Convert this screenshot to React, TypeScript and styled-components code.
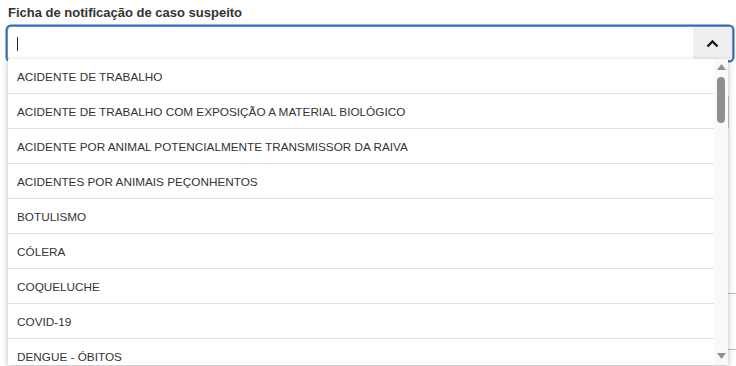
import * as React from "react";
import styled, { createGlobalStyle } from "styled-components";

const Global = createGlobalStyle`
  html, body {
    margin: 0;
    padding: 0;
    background: #ffffff;
    overflow: hidden;
  }
  body {
    font-family: "Liberation Sans", Arial, sans-serif;
    color: #333333;
  }
`;

const Page = styled.div`
  position: relative;
  width: 736px;
  height: 366px;
  padding: 4px 0 0 7px;
  box-sizing: border-box;
  overflow: hidden;
`;

const Label = styled.div`
  font-size: 13px;
  font-weight: 700;
  color: #333333;
  line-height: 17px;
  margin: 0 0 5px 1px;
`;

const Field = styled.div`
  position: relative;
  width: 726px;
`;

const InputBox = styled.div`
  height: 33px;
  border: 1px solid #888888;
  border-radius: 4px;
  box-shadow: 0 0 0 1.5px #1a6fd0;
  display: flex;
  align-items: stretch;
  overflow: hidden;
  background: #ffffff;
`;

const InputArea = styled.div`
  flex: 1;
  display: flex;
  align-items: center;
  padding-left: 9px;
`;

const Caret = styled.span`
  width: 1px;
  height: 14px;
  background: #222222;
`;

const ToggleButton = styled.div`
  width: 39px;
  background: #efeff1;
  display: flex;
  align-items: center;
  justify-content: center;
`;

const Behind = styled.div`
  display: flex;
  flex-direction: column;
  padding-left: 20px;
`;

const GhostSelect = styled.div`
  margin-top: 33px;
  height: 34px;
  width: 700px;
  border: 1px solid #cccccc;
  border-radius: 3px;
`;

const GhostTextarea = styled.div`
  margin-top: 163px;
  height: 55px;
  width: 709px;
  border-top: 1px solid #b9b9c8;
  border-bottom: 1px solid #b9b9c8;
`;

const Dropdown = styled.div`
  position: absolute;
  top: 33px;
  left: 1px;
  width: 720px;
  height: 306px;
  background: #ffffff;
  box-shadow: 0 2px 6px rgba(0, 0, 0, 0.28);
  display: flex;
  overflow: hidden;
  z-index: 2;
`;

const Options = styled.div`
  flex: 1;
  display: flex;
  flex-direction: column;
`;

const Option = styled.div`
  height: 35px;
  flex: none;
  box-sizing: border-box;
  border-bottom: 1px solid #e1e1e8;
  display: flex;
  align-items: center;
  padding-left: 9px;
  font-size: 11.75px;
  color: #333333;
`;

const Scrollbar = styled.div`
  width: 14px;
  background: #f9f9f9;
  display: flex;
  flex-direction: column;
  align-items: center;
  padding: 5px 0 6px;
  box-sizing: border-box;
`;

const Thumb = styled.div`
  width: 8px;
  height: 46px;
  border-radius: 4px;
  background: #8f8f8f;
  margin-top: 7px;
`;

const Spacer = styled.div`
  flex: 1;
`;

const options = [
  "ACIDENTE DE TRABALHO",
  "ACIDENTE DE TRABALHO COM EXPOSIÇÃO A MATERIAL BIOLÓGICO",
  "ACIDENTE POR ANIMAL POTENCIALMENTE TRANSMISSOR DA RAIVA",
  "ACIDENTES POR ANIMAIS PEÇONHENTOS",
  "BOTULISMO",
  "CÓLERA",
  "COQUELUCHE",
  "COVID-19",
  "DENGUE - ÓBITOS",
];

const Arrow = ({ down }: { down?: boolean }) => (
  <svg width="9" height="6" viewBox="0 0 9 6">
    <path d={down ? "M0 0 L9 0 L4.5 6 Z" : "M0 6 L9 6 L4.5 0 Z"} fill="#8f8f8f" />
  </svg>
);

export default function App() {
  return (
    <Page>
      <Global />
      <Label>Ficha de notificação de caso suspeito</Label>
      <Field>
        <InputBox>
          <InputArea>
            <Caret />
          </InputArea>
          <ToggleButton>
            <svg width="13" height="9" viewBox="0 0 13 9">
              <path d="M1.5 7.5 L6.5 2.5 L11.5 7.5" fill="none" stroke="#1b1b1b" strokeWidth="2.4" />
            </svg>
          </ToggleButton>
        </InputBox>
        <Behind>
          <GhostSelect />
          <GhostTextarea />
        </Behind>
        <Dropdown>
          <Options>
            {options.map((o) => (
              <Option key={o}>{o}</Option>
            ))}
          </Options>
          <Scrollbar>
            <Arrow />
            <Thumb />
            <Spacer />
            <Arrow down />
          </Scrollbar>
        </Dropdown>
      </Field>
    </Page>
  );
}
